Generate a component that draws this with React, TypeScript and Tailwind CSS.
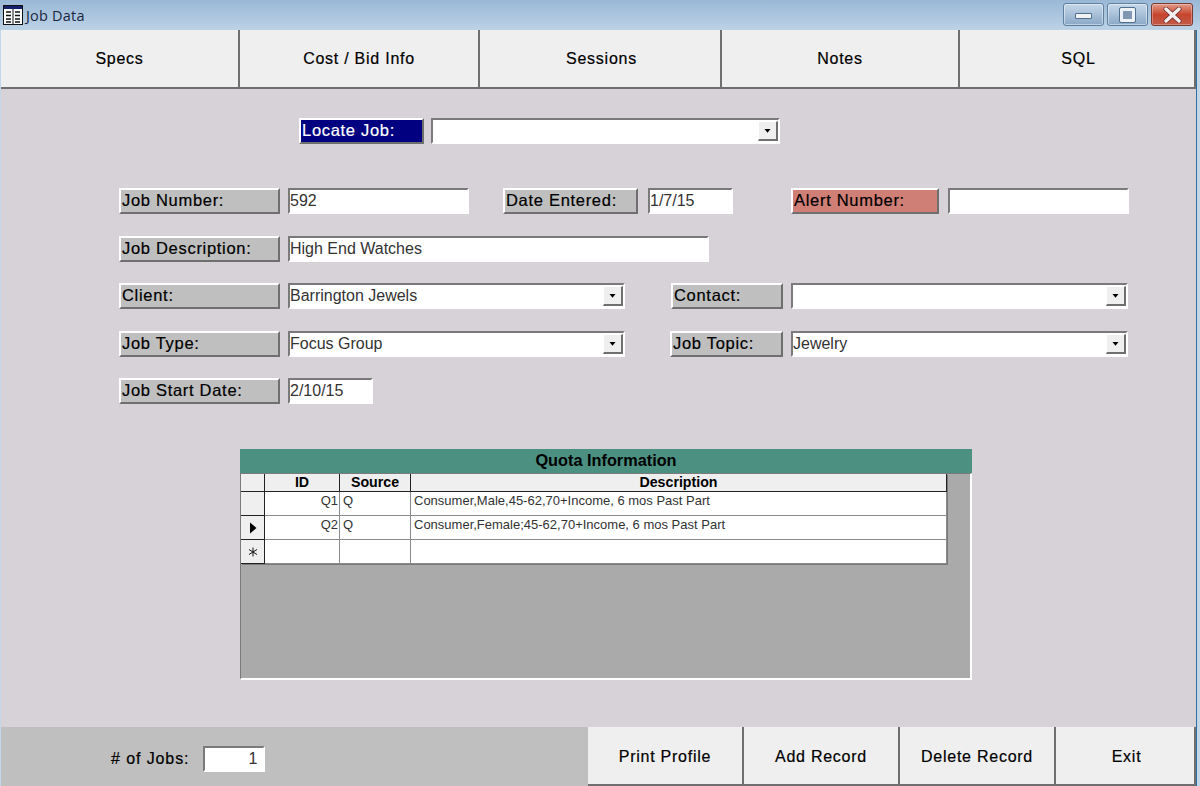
import React from "react";

const font = "font-['Liberation_Sans',Arial,sans-serif]";
const raised = "border-2 border-t-white border-l-white border-r-[#6f6f6f] border-b-[#6f6f6f]";
const sunken = "border-2 border-t-[#7a7a7a] border-l-[#7a7a7a] border-r-white border-b-white";

function Label({ w, children, cls = "bg-[#bfbfbf] text-black" }: { w: string; children: React.ReactNode; cls?: string }) {
  return (
    <div className={`${w} h-[26px] ${raised} ${cls} flex items-center pl-[1px] pb-[1px] text-[16.5px] tracking-[0.7px] [-webkit-text-stroke:0.2px_currentColor] whitespace-nowrap`}>
      {children}
    </div>
  );
}

function Field({ w, children, right }: { w: string; children?: React.ReactNode; right?: boolean }) {
  return (
    <div className={`${w} h-[26px] ${sunken} bg-white flex items-center ${right ? "justify-end pr-[6px]" : ""} text-[16px] text-[#333] whitespace-nowrap`}>
      {children}
    </div>
  );
}

function Combo({ w, children }: { w: string; children?: React.ReactNode }) {
  return (
    <div className={`${w} h-[26px] ${sunken} bg-white flex items-center text-[16px] text-[#333] whitespace-nowrap`}>
      <span className="flex-1">{children}</span>
      <span className="w-[20px] h-[20px] bg-[#efefef] border-r-2 border-b-2 border-r-[#6f6f6f] border-b-[#6f6f6f] border-t border-l border-t-white border-l-white flex items-center justify-center shrink-0">
        <svg width="7" height="4" viewBox="0 0 7 4"><path d="M0.5 0h6L3.5 3.8z" fill="#000" /></svg>
      </span>
    </div>
  );
}

function Tab({ w, children, cls = "" }: { w: string; children: React.ReactNode; cls?: string }) {
  return (
    <div className={`${w} ${cls} h-full bg-[#efefef] border-r-2 border-r-[#6f6f6f] border-b-2 border-b-[#6f6f6f] flex items-center justify-center text-[16px] tracking-[0.75px] [-webkit-text-stroke:0.2px_currentColor] text-black`}>
      {children}
    </div>
  );
}

const cell = "border-r border-b border-[#8a8a8a] flex items-center text-[13px] text-[#333] bg-white";
const head = "border-r border-b border-r-[#222] border-b-[#222] bg-[#efefef] flex items-center justify-center text-[14.2px] font-bold text-black";
const sel = "border-r border-b border-r-[#222] border-b-[#222] bg-[#efefef] flex items-center justify-center";

const rows = [
  { id: "Q1", src: "Q", desc: "Consumer,Male,45-62,70+Income, 6 mos Past Part", mark: "" },
  { id: "Q2", src: "Q", desc: "Consumer,Female;45-62,70+Income, 6 mos Past Part", mark: "arrow" },
  { id: "", src: "", desc: "", mark: "star" },
];

export default function App() {
  return (
    <div className={`w-[1200px] h-[786px] flex flex-col overflow-hidden bg-[#c3d7e9] ${font}`}>
      {/* title bar */}
      <div className="h-[30px] shrink-0 flex items-center bg-gradient-to-b from-[#9ab8d6] to-[#bcd2e6]">
        <svg width="20" height="20" viewBox="0 0 20 20" className="ml-[3px] mr-[3px]">
          <rect x="0.5" y="0.5" width="19" height="19" fill="#fff" stroke="#111" />
          <rect x="1" y="1" width="18" height="3" fill="#14206e" />
          <path d="M3 7h5M3 10.5h5M3 14h5M3 17h5" stroke="#111" strokeWidth="1.3" />
          <path d="M12 7h5M12 10.5h5M12 14h5M12 17h5" stroke="#111" strokeWidth="1.3" />
          <path d="M10 4v16" stroke="#111" />
        </svg>
        <span className="text-[14.5px] text-[#1a2740] tracking-[0.2px] mt-[1px] font-['Open_Sans',sans-serif]">Job Data</span>
        <div className="ml-auto flex gap-[3px] mr-[7px] mt-[-1px]">
          <div className="w-[41px] h-[23px] rounded-[3px] border border-[#5f7f9f] bg-gradient-to-b from-[#c6d8ea] via-[#a8c0d8] to-[#8aa8c6] flex items-center justify-center shadow-[inset_0_0_0_1px_rgba(255,255,255,0.45)]">
            <div className="w-[17px] h-[6px] bg-[#f2f2f2] border border-[#4f6f8f] rounded-[1px] mt-[3px]" />
          </div>
          <div className="w-[41px] h-[23px] rounded-[3px] border border-[#5f7f9f] bg-gradient-to-b from-[#c6d8ea] via-[#a8c0d8] to-[#8aa8c6] flex items-center justify-center shadow-[inset_0_0_0_1px_rgba(255,255,255,0.45)]">
            <div className="w-[15px] h-[14px] bg-[#7f97b0] border-[3px] border-[#eef2f6] outline outline-1 outline-[#4f6f8f] rounded-[1px]" />
          </div>
          <div className="w-[42px] h-[23px] rounded-[3px] border border-[#7a3a30] bg-gradient-to-b from-[#e09a88] via-[#c8442c] to-[#c05a48] flex items-center justify-center shadow-[inset_0_0_0_1px_rgba(255,255,255,0.3)]">
            <svg width="19" height="16" viewBox="0 0 19 16">
              <path d="M3 2l13 12M16 2L3 14" stroke="#6b3030" strokeWidth="5" strokeLinecap="round" />
              <path d="M3 2l13 12M16 2L3 14" stroke="#f4eeee" strokeWidth="3.4" strokeLinecap="round" />
            </svg>
          </div>
        </div>
      </div>

      {/* window body */}
      <div className="flex-1 flex min-h-0 pl-[1px] pr-[3px]">
        <div className="flex-1 flex flex-col min-w-0 bg-[#d7d2d8] border-r border-r-[#2d6f9e]">
          {/* tabs */}
          <div className="h-[59px] shrink-0 flex">
            <Tab w="w-[239px]">Specs</Tab>
            <Tab w="w-[240px]">Cost / Bid Info</Tab>
            <Tab w="w-[242px]" cls="pl-[3px]">Sessions</Tab>
            <Tab w="w-[238px]">Notes</Tab>
            <Tab w="flex-1" cls="pl-[3px]">SQL</Tab>
          </div>

          {/* form */}
          <div className="flex-1 min-h-0 flex flex-col">
            <div className="flex mt-[29px] ml-[298px]">
              <Label w="w-[125px]" cls="bg-[#000080] text-white">Locate Job:</Label>
              <div className="w-[7px]" />
              <Combo w="w-[349px]" />
            </div>

            <div className="flex mt-[44px] ml-[118px]">
              <Label w="w-[161px]">Job Number:</Label>
              <div className="ml-[8px]"><Field w="w-[181px]">592</Field></div>
              <div className="ml-[34px]"><Label w="w-[135px]">Date Entered:</Label></div>
              <div className="ml-[10px]"><Field w="w-[85px]">1/7/15</Field></div>
              <div className="ml-[58px]"><Label w="w-[148px]" cls="bg-[#cf7f75] text-black">Alert Number:</Label></div>
              <div className="ml-[9px]"><Field w="w-[181px]" /></div>
            </div>

            <div className="flex mt-[22px] ml-[118px]">
              <Label w="w-[161px]">Job Description:</Label>
              <div className="ml-[8px]"><Field w="w-[421px]">High End Watches</Field></div>
            </div>

            <div className="flex mt-[21px] ml-[118px]">
              <Label w="w-[161px]">Client:</Label>
              <div className="ml-[8px]"><Combo w="w-[337px]">Barrington Jewels</Combo></div>
              <div className="ml-[46px]"><Label w="w-[112px]">Contact:</Label></div>
              <div className="ml-[8px]"><Combo w="w-[337px]" /></div>
            </div>

            <div className="flex mt-[22px] ml-[118px]">
              <Label w="w-[161px]">Job Type:</Label>
              <div className="ml-[8px]"><Combo w="w-[337px]">Focus Group</Combo></div>
              <div className="ml-[45px]"><Label w="w-[113px]">Job Topic:</Label></div>
              <div className="ml-[8px]"><Combo w="w-[337px]">Jewelry</Combo></div>
            </div>

            <div className="flex mt-[21px] ml-[118px]">
              <Label w="w-[161px]">Job Start Date:</Label>
              <div className="ml-[8px]"><Field w="w-[85px]">2/10/15</Field></div>
            </div>

            {/* quota */}
            <div className="mt-[45px] ml-[239px] w-[732px] h-[231px] flex flex-col">
              <div className="h-[24px] shrink-0 pb-[1px] bg-[#4b9080] flex items-center justify-center text-[16.3px] font-bold text-black">
                Quota Information
              </div>
              <div className="flex-1 border-l border-t border-r-2 border-b-2 border-t-[#7a7a7a] border-l-[#7a7a7a] border-r-white border-b-white bg-[#aaaaaa]">
                <div className="w-[706px] grid grid-cols-[24px_75px_71px_1fr] grid-rows-[18px_24px_24px_24px] shadow-[1px_1px_0_#7a7a7a]">
                  <div className={head} />
                  <div className={head}>ID</div>
                  <div className={head}>Source</div>
                  <div className={head}>Description</div>
                  {rows.map((r) => (
                    <React.Fragment key={r.id || "new"}>
                      <div className={sel}>
                        {r.mark === "arrow" && (
                          <svg width="8" height="12" viewBox="0 0 8 12"><path d="M1 0.5v11L7.5 6z" fill="#000" /></svg>
                        )}
                        {r.mark === "star" && (
                          <svg width="10" height="10" viewBox="0 0 10 10"><path d="M5 0.5v9M1 2.5l8 5M9 2.5l-8 5" stroke="#111" strokeWidth="1" /></svg>
                        )}
                      </div>
                      <div className={`${cell} justify-end pr-[1px] pb-[5px]`}>{r.id}</div>
                      <div className={`${cell} pl-[3px] pb-[5px]`}>{r.src}</div>
                      <div className={`${cell} pl-[3px] pb-[5px] whitespace-nowrap`}>{r.desc}</div>
                    </React.Fragment>
                  ))}
                </div>
              </div>
            </div>
          </div>

          {/* footer */}
          <div className="h-[59px] shrink-0 flex bg-[#bfbfbf]">
            <div className="w-[587px] flex items-center pl-[110px] pt-[4px]">
              <span className="text-[16px] tracking-[0.9px] [-webkit-text-stroke:0.2px_currentColor] text-black">#&nbsp;of Jobs:</span>
              <div className="ml-[14px]"><Field w="w-[62px]" right>1</Field></div>
            </div>
            <Tab w="w-[156px]" cls="pt-[2px]">Print Profile</Tab>
            <Tab w="w-[156px]" cls="pt-[2px]">Add Record</Tab>
            <Tab w="w-[156px]" cls="pt-[2px]">Delete Record</Tab>
            <Tab w="flex-1" cls="pt-[2px] pl-[3px]">Exit</Tab>
          </div>
        </div>
      </div>
    </div>
  );
}
